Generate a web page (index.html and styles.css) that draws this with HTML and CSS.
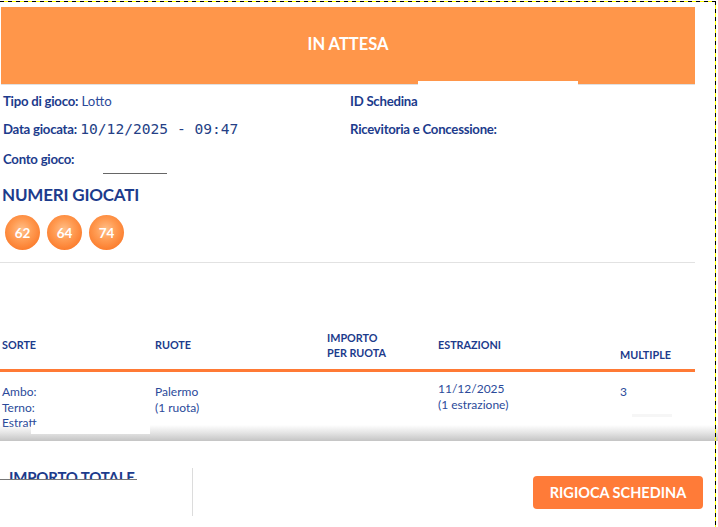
FILE: index.html
```html
<!DOCTYPE html>
<html lang="it">
<head>
<meta charset="utf-8">
<title>Schedina</title>
<link rel="stylesheet" href="styles.css">
</head>
<body>
<div class="screen">
  <div class="main">
    <div class="page">
      <div class="status">IN ATTESA</div>
      <div class="info">
        <div class="info-row r1"><span class="lbl">Tipo di gioco:</span> <span class="val">Lotto</span></div>
        <div class="info-row r1"><span class="lbl">ID Schedina</span></div>
        <div class="info-row r2"><span class="lbl">Data giocata:</span> <span class="mono">10/12/2025 - 09:47</span></div>
        <div class="info-row r2"><span class="lbl">Ricevitoria e Concessione:</span></div>
        <div class="info-row r3"><span class="lbl">Conto gioco:</span></div>
        <div class="info-row r3"></div>
      </div>
      <div class="conto-line"></div>
      <h2 class="numeri-title">NUMERI GIOCATI</h2>
      <div class="balls">
        <span class="ball">62</span>
        <span class="ball">64</span>
        <span class="ball">74</span>
      </div>
      <div class="sep"></div>
      <div class="thead">
        <div class="th">SORTE</div>
        <div class="th">RUOTE</div>
        <div class="th">IMPORTO<br>PER RUOTA</div>
        <div class="th">ESTRAZIONI</div>
        <div class="th th-bottom">MULTIPLE</div>
      </div>
      <div class="tbody">
        <div class="td">Ambo:<br>Terno:<br>Estratt</div>
        <div class="td">Palermo<br>(1 ruota)</div>
        <div class="td"></div>
        <div class="td td-up">11/12/2025<br>(1 estrazione)</div>
        <div class="td">3</div>
      </div>
    </div>
    <div class="redact redact-head"></div>
    <div class="redact redact-estr"></div>
    <div class="redact redact-mult"></div>
    <div class="shadow"></div>
  </div>
  <div class="footer">
    <div class="total"><span class="total-label">IMPORTO TOTALE</span></div>
    <div class="divider"></div>
    <div class="spacer"></div>
    <button class="btn">RIGIOCA SCHEDINA</button>
  </div>
  <div class="marquee marquee-top"></div>
  <div class="marquee marquee-right"></div>
</div>
</body>
</html>
```
FILE: styles.css
```css
* { box-sizing: border-box; }
html, body { margin: 0; padding: 0; background: #fff; }
body {
  font-family: Lato, "Open Sans", sans-serif;
  color: #1e3d8f;
  width: 718px;
  height: 527px;
  overflow: hidden;
}
.screen { position: relative; width: 718px; height: 527px; }

.main {
  position: relative;
  height: 441px;
  overflow: hidden;
}
.page {
  width: 695px;
  padding-top: 7px;
}
.status {
  margin-left: 1px;
  height: 78px;
  background: #ff964a;
  color: #fff;
  font-weight: 700;
  font-size: 16.5px;
  display: flex;
  align-items: center;
  justify-content: center;
  border-bottom: 1px solid #e0e0e0;
  padding-bottom: 3px;
}
.info {
  display: grid;
  grid-template-columns: 347px 1fr;
  padding-left: 3px;
  padding-top: 2px;
}
.info-row { font-size: 13.2px; white-space: nowrap; }
.r1 { height: 28px; line-height: 28px; }
.r2 { height: 28px; line-height: 28px; }
.r3 { height: 30px; line-height: 32px; }
.lbl { font-weight: 700; color: #1c3b8c; letter-spacing: -0.25px; }
.val { color: #2b4a9a; }
.mono {
  font-family: "DejaVu Sans Mono", "Liberation Mono", monospace;
  font-size: 14.6px;
  color: #253f86;
  letter-spacing: 0;
}
.conto-line {
  margin-left: 103px;
  width: 64px;
  height: 1px;
  background: #666;
}
.numeri-title {
  margin: 0;
  padding-left: 2px;
  margin-top: 11px;
  font-size: 17px;
  line-height: 20px;
  font-weight: 700;
  color: #1c3b8c;
  letter-spacing: -0.2px;
}
.balls {
  display: flex;
  gap: 7px;
  padding-left: 5px;
  margin-top: 10px;
}
.ball {
  width: 35px;
  height: 35px;
  border-radius: 50%;
  background: radial-gradient(circle at 48% 42%, #ffc08a 0%, #ff9b52 38%, #fb7a2a 78%, #f46f1e 100%);
  color: #fff;
  font-weight: 700;
  font-size: 13.5px;
  display: flex;
  align-items: center;
  justify-content: center;
}
.sep {
  margin-top: 12px;
  height: 1px;
  background: #e2e2e2;
}
.thead, .tbody {
  display: grid;
  grid-template-columns: 153px 172px 111px 182px 1fr;
  padding-left: 2px;
}
.thead {
  margin-top: 61px;
  height: 48px;
  padding-bottom: 4px;
  align-items: center;
  border-bottom: 3px solid #ff7a35;
}
.th {
  font-size: 10.8px;
  line-height: 15px;
  font-weight: 700;
  color: #1c3b8c;
}
.th-bottom { align-self: end; margin-bottom: 3px; }
.tbody {
  padding-top: 12px;
  font-size: 12px;
  line-height: 15.5px;
  color: #2b4a9a;
}
.td-up { margin-top: -3px; }
.td-three { margin-top: 1px; }

.redact { position: absolute; background: #fff; }
.redact-head { left: 418px; top: 81px; width: 160px; height: 6px; }
.redact-estr { left: 31px; top: 425px; width: 119px; height: 9px; z-index: 2; }
.redact-mult { left: 632px; top: 414px; width: 40px; height: 3px; background: #f6f6f6; }
.shadow {
  position: absolute;
  left: 0;
  right: 0;
  bottom: 0;
  height: 16px;
  background: linear-gradient(to bottom, rgba(200,200,200,0) 0%, rgba(200,200,200,0.5) 50%, #c4c4c4 100%);
  pointer-events: none;
}

.footer {
  height: 86px;
  display: flex;
  align-items: flex-start;
}
.total {
  width: 137px;
  height: 39px;
  overflow: hidden;
  border-bottom: 1px solid #777;
  position: relative;
}
.total-label {
  position: absolute;
  left: 9px;
  top: 27px;
  font-size: 15px;
  font-weight: 700;
  color: #1c3b8c;
  letter-spacing: -0.2px;
  white-space: nowrap;
}
.divider {
  margin-left: 55px;
  margin-top: 27px;
  width: 1px;
  height: 48px;
  background: #dcdcdc;
}
.spacer { flex: 1; }
.btn {
  margin-top: 35px;
  margin-right: 15px;
  width: 170px;
  height: 33px;
  border: 0;
  border-radius: 4px;
  background: #ff7b38;
  color: #fff;
  font-family: Lato, "Open Sans", sans-serif;
  font-weight: 700;
  font-size: 14.5px;
  padding: 0;
}

.marquee { position: absolute; pointer-events: none; }
.marquee-top {
  left: 0; top: 1px; width: 716px; height: 1px;
  background: repeating-linear-gradient(to right, #000 0 4px, #ffff00 4px 8px);
}
.marquee-right {
  left: 715px; top: 1px; width: 1px; height: 526px;
  background: repeating-linear-gradient(to bottom, #000 0 4px, #ffff00 4px 8px);
}
```
